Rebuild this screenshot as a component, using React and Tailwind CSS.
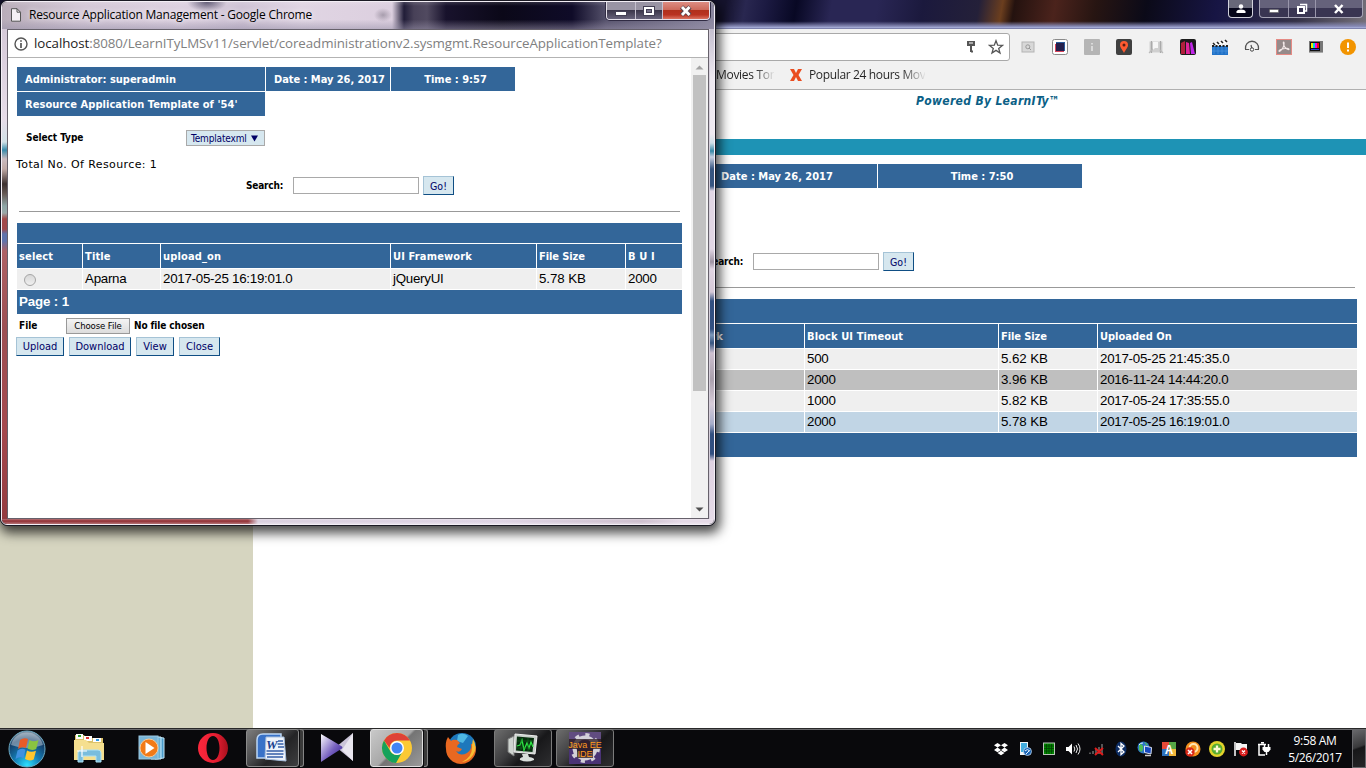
import React from "react";

const TAHOMA = "font-['DejaVu_Sans_Condensed','DejaVu_Sans',sans-serif]";
const SEGOE = "font-['Open_Sans','Noto_Sans',sans-serif]";
const ARIAL = "font-['Liberation_Sans',Arial,sans-serif]";

function Svg({ s = 16, w, h, children, className = "", box }) {
  const W = w || s;
  const H = h || s;
  return (
    <svg width={W} height={H} viewBox={box || `0 0 ${W} ${H}`} className={`shrink-0 ${className}`}>
      {children}
    </svg>
  );
}

/* ---------- shared page controls ---------- */

function Btn({ children, className = "" }) {
  return (
    <button
      className={`h-[19px] shrink-0 border border-t-[#a5c3d6] border-l-[#a5c3d6] border-r-[#0f4e84] border-b-[#0f4e84] bg-[#d6e7ef] text-center leading-[18px] whitespace-nowrap text-[#000066] ${TAHOMA} ${className}`}
    >
      {children}
    </button>
  );
}

function SearchRow({ className = "" }) {
  return (
    <div className={`flex h-[19px] items-center ${className}`}>
      <span className={`w-[47px] shrink-0 text-[10px] font-bold tracking-[-0.2px] text-black ${TAHOMA}`}>Search:</span>
      <div className="h-[17px] w-[126px] shrink-0 border border-[#a9a9a9] bg-white" />
      <Btn className="ml-1 w-[31px] text-[10.5px]">Go!</Btn>
    </div>
  );
}

/* ---------- toolbar extension icons ---------- */

function Extensions() {
  return (
    <div className="flex items-center gap-4">
      <Svg>
        <rect x="2" y="3" width="12" height="10" fill="#d8d8d8" stroke="#b4b4b4" />
        <circle cx="7.8" cy="7.8" r="2" fill="none" stroke="#999" />
        <path d="M9 9l2 2" stroke="#999" />
      </Svg>
      <Svg>
        <rect x="0.5" y="0.5" width="15" height="15" rx="2" fill="#fff" stroke="#8a8a8a" />
        <rect x="3" y="5" width="9" height="8" fill="#d9455c" />
        <rect x="4" y="3" width="9" height="9" fill="#2a5c9c" />
        <rect x="4" y="4" width="8" height="8" fill="#24204c" />
      </Svg>
      <Svg>
        <rect width="16" height="16" rx="1" fill="#b5b5b5" />
        <path d="M8 4v1.5M8 7v5" stroke="#eee" strokeWidth="1.3" />
      </Svg>
      <Svg>
        <rect width="16" height="16" rx="2" fill="#404040" />
        <path d="M8 14C6 10 4 8.500 4 6a4 4 0 0 1 8 0C12 8.500 10 10 8 14z" fill="#ff5a30" />
        <circle cx="8" cy="6" r="1.500" fill="#5a1d10" />
      </Svg>
      <Svg>
        <path d="M1.500 2.500h13v11h-13z" fill="#d0d0d0" />
        <path d="M3.500 2v12M12.500 2v12" stroke="#aaa" strokeWidth="1.200" />
        <path d="M1 14l5-5M15 14l-3-3" stroke="#bbb" strokeWidth="1.200" />
        <path d="M5 3h5v6H7l-2 2z" fill="#f6f6f6" />
      </Svg>
      <Svg>
        <rect width="16" height="16" rx="2" fill="#1b1b1b" />
        <path d="M1 4l4-2v13H1z" fill="#b0203c" />
        <path d="M6 3l3 1 1 11H6z" fill="#e0249a" />
        <path d="M10 4l2-1 3 12h-4z" fill="#c026e8" />
      </Svg>
      <Svg>
        <rect x="0" y="7" width="16" height="9" fill="#2273c8" />
        <path d="M0 5l15-4v3L1 7z" fill="#fff" />
        <path d="M1 4l2 2M5 3l2 2M9 2l2 2M13 1l2 2" stroke="#222" strokeWidth="1.600" />
        <path d="M0 7h16" stroke="#222" strokeWidth="1.800" strokeDasharray="2 1.500" />
        <path d="M2 8v7M6 8v7M10 8v7M14 8v7M0 12h16" stroke="#4a94dc" strokeWidth="0.700" />
      </Svg>
      <Svg>
        <path d="M1.500 10a6.600 6.600 0 1 1 13 0" fill="none" stroke="#555" strokeWidth="1.300" />
        <path d="M1 10.500h4M11 10.500h4M7 6l1 4" stroke="#555" strokeWidth="1.200" />
        <circle cx="8" cy="10.500" r="1.700" fill="#fff" stroke="#444" />
      </Svg>
      <Svg>
        <rect x="0.500" y="0.500" width="15" height="15" fill="#958a8a" stroke="#e58a84" />
        <path d="M7.500 3c1.200 0 .5 4-1 6.500S3 13 3 12s3-2 6-2.500 4 0 4 .8-2.500 0-4-2S7 3 7.500 3z" fill="none" stroke="#f3e8e8" strokeWidth="1.100" />
      </Svg>
      <Svg>
        <rect x="1" y="2" width="14" height="11" fill="#777" />
        <rect x="2" y="3" width="10" height="9" fill="#111" />
        <path d="M4 4v5" stroke="#ee0" strokeWidth="2" />
        <path d="M6 4v5" stroke="#0dd" strokeWidth="2" />
        <path d="M8 4v5" stroke="#e0e" strokeWidth="2" />
        <path d="M10 4v5" stroke="#e11" strokeWidth="2" />
        <path d="M3 10.500h8" stroke="#2a3fd0" />
        <path d="M1 13.500h14" stroke="#aaa" />
      </Svg>
      <Svg>
        <circle cx="8" cy="8" r="8" fill="#f29400" />
        <path d="M8 3.500v5.500M8 10.500v2" stroke="#fff" strokeWidth="2" />
      </Svg>
    </div>
  );
}

/* ---------- main browser ---------- */

const ROWS = [
  ["500", "5.62 KB", "2017-05-25 21:45:35.0", "bg-[#efefef]"],
  ["2000", "3.96 KB", "2016-11-24 14:44:20.0", "bg-[#bfbfbf]"],
  ["1000", "5.82 KB", "2017-05-24 17:35:55.0", "bg-[#efefef]"],
  ["2000", "5.78 KB", "2017-05-25 16:19:01.0", "bg-[#c1d5e5]"],
];

function MainTitleBar() {
  return (
    <div className="flex h-[29px] shrink-0 items-start justify-end border-b border-[#7e82ae] bg-[linear-gradient(180deg,transparent_76%,#8689b5_94%,#aeb6df_100%),linear-gradient(100deg,#15132d_0,#15132d_715px,#292750_735px,#1c1a42_755px,#080824_785px,#292654_820px,#292654_865px,#1b193d_910px,#242039_965px,#6b3e1e_988px,#24120f_1000px,#4b231c_1040px,#271512_1080px,#0b0a18_1130px,#171544_1200px,#343147_1280px,#75717a_1350px)]">
      <div className="mr-[6px] flex h-[18px] w-[25px] items-center justify-center rounded-b-[4px] border border-t-0 border-[#d2d2dc] bg-[linear-gradient(180deg,#686879_45%,#06061a_46%)]">
        <Svg w={12} h={12}>
          <circle cx="6" cy="3.500" r="2.200" fill="#fff" />
          <path d="M1.500 10V8.500Q2 6.500 6 6.500t4.500 2V10z" fill="#fff" />
        </Svg>
      </div>
      <div className="mr-[3px] flex h-[18px] w-[104px] rounded-b-[4px] border border-t-0 border-[#a4a2b4] bg-[linear-gradient(180deg,#65627b_45%,#393552_46%)]">
        <div className="flex w-[29px] items-center justify-center border-r border-[#9996ab]">
          <Svg w={12} h={12}><rect x="1.500" y="6.500" width="9" height="3" fill="#fff" stroke="#555" strokeWidth=".5" /></Svg>
        </div>
        <div className="flex w-[27px] items-center justify-center border-r border-[#9996ab]">
          <Svg w={12} h={12}>
            <path d="M4 1.500h6.500v6.500H9" fill="none" stroke="#fff" strokeWidth="1.500" />
            <rect x="2" y="4" width="6" height="6" fill="none" stroke="#fff" strokeWidth="2" />
          </Svg>
        </div>
        <div className="flex flex-1 items-center justify-center">
          <Svg w={12} h={12}><path d="M2 2l7.500 8M9.500 2L2 10" stroke="#fff" strokeWidth="2.500" /></Svg>
        </div>
      </div>
    </div>
  );
}

function MainToolbar() {
  return (
    <div className="flex h-[61px] shrink-0 flex-col border-b border-[#b0b0b0] bg-[#f1f1f1]">
      <div className="flex h-[36px] items-center pr-[10px]">
        <div className="flex h-[28px] w-[1010px] items-center justify-end gap-[9px] rounded-[3px] border border-[#a9a9a9] bg-white pr-[5px]">
          <Svg>
            <path d="M4 2h8v5H4z" fill="#555" />
            <path d="M6 4h4" stroke="#fff" />
            <path d="M8 6v7M8 12.500h2" stroke="#555" strokeWidth="2" />
          </Svg>
          <Svg>
            <path d="M8 1.700l1.700 4.500 4.700.2-3.700 3 1.300 4.600L8 11.400 4 14l1.300-4.600-3.700-3 4.700-.2z" fill="none" stroke="#555" strokeWidth="1.300" />
          </Svg>
        </div>
        <div className="ml-[10px]"><Extensions /></div>
      </div>
      <div className={`flex h-[20px] items-center pl-[716px] text-[12px] text-[#333] ${SEGOE}`}>
        <div className="w-[59px]">
          <span className="inline-block bg-[linear-gradient(90deg,#222_68%,#e4e4e4_100%)] bg-clip-text tracking-[-0.3px] whitespace-nowrap text-transparent">Movies Tor</span>
        </div>
        <Svg className="ml-[14px]" w={14} h={14}>
          <path d="M1 1h4l2 4 2-4h4L9.500 7l3.500 6H9L7 9l-2 4H1l3.500-6z" fill="#ea4d20" />
        </Svg>
        <div className="ml-[6px]">
          <span className="inline-block bg-[linear-gradient(90deg,#222_80%,#e4e4e4_100%)] bg-clip-text tracking-[-0.35px] whitespace-nowrap text-transparent">Popular 24 hours Mov</span>
        </div>
      </div>
    </div>
  );
}

function MainPage() {
  const grid = "grid grid-cols-[542px_193px_98px_259px] gap-x-px";
  return (
    <div className="flex flex-1 flex-col bg-white">
      <div className="h-[49px] shrink-0 pl-[916px]">
        <span className={`block pt-[2px] text-[12px] leading-[18px] font-bold tracking-[0.33px] whitespace-nowrap text-[#0b5f86] italic ${TAHOMA}`}>Powered By LearnITy™</span>
      </div>
      <div className="h-4 shrink-0 bg-[#1e93b5]" />
      <div className="flex flex-1">
        <div className="w-[253px] shrink-0 bg-[#d6d5c0]" />
        <div className="flex-1 pt-[9px] pl-[9px]">
          <div className={`grid h-6 grid-cols-[411px_203px_204px] gap-x-px text-center text-[11px] leading-[25px] font-bold text-white ${TAHOMA}`}>
            <div className="h-6 bg-[#336699]" />
            <div className="h-6 bg-[#336699] pl-[3px]">Date : May 26, 2017</div>
            <div className="h-6 bg-[#336699] pl-[4px]">Time : 7:50</div>
          </div>
          <SearchRow className="mt-[64px] ml-[444px]" />
          <div className="mt-4 ml-[2px] h-px w-[1091px] bg-[#999]" />
          <div className="mt-[11px] flex w-[1095px] flex-col gap-px">
            <div className="h-6 bg-[#336699]" />
            <div className={`${grid} h-6 text-[11px] leading-[26px] font-bold tracking-[0.1px] text-white ${TAHOMA}`}>
              <div className="h-6 bg-[#336699] pr-[81px] text-right">UI Framework</div>
              <div className="h-6 bg-[#336699] pl-[2px]">Block UI Timeout</div>
              <div className="h-6 bg-[#336699] pl-[2px] tracking-[-0.1px]">File Size</div>
              <div className="h-6 bg-[#336699] pl-[2px] tracking-[0px]">Uploaded On</div>
            </div>
            {ROWS.map((r, i) => (
              <div key={i} className={`${grid} h-5 text-[13.33px] leading-[19px] tracking-[-0.26px] text-black ${ARIAL}`}>
                <div className={`h-5 ${r[3]}`} />
                <div className={`h-5 pl-[2px] ${r[3]}`}>{r[0]}</div>
                <div className={`h-5 pl-[2px] tracking-[-0.1px] ${r[3]}`}>{r[1]}</div>
                <div className={`h-5 pl-[2px] ${r[3]}`}>{r[2]}</div>
              </div>
            ))}
            <div className="h-6 bg-[#336699]" />
          </div>
        </div>
      </div>
    </div>
  );
}

/* ---------- popup window ---------- */

function PopupTitle() {
  return (
    <div className="flex h-[27px] shrink-0 items-start bg-[radial-gradient(ellipse_20px_10px_at_205px_0,#45405ccc,transparent),radial-gradient(ellipse_9px_7px_at_381px_13px,#8d8494aa,transparent),linear-gradient(180deg,#ffffff22_0,transparent_15%,transparent_65%,#9992aa88_100%),linear-gradient(90deg,#b9adb9_0,#d4c8d7_80px,#ddd1e0_180px,#cfc3d5_240px,#e0d5e3_300px,#dccfdf_390px,#211d38_402px,#484158_412px,#514a60_425px,#18122c_444px,#0b0818_500px,#0f0b28_570px,#55516b_604px,#8d89a1_716px)]">
      <Svg w={12} h={14} className="mt-[6px] ml-[8px]">
        <path d="M1.500.7h5.500l3.500 3.500v9h-9z" fill="#f4f0f4" stroke="#555" />
        <path d="M7 .7v3.500h3.500" fill="none" stroke="#555" />
      </Svg>
      <div className={`ml-[7px] flex-1 pt-[4px] text-[12px] leading-[18px] tracking-[-0.2px] whitespace-nowrap text-black [text-shadow:0_0_6px_#fff] ${SEGOE}`}>Resource Application Management - Google Chrome</div>
      <div className="mr-[4px] flex h-[18px] w-[104px] overflow-hidden rounded-b-[4px] border border-t-0 border-[#e5e1ea] shadow-[0_0_0_1px_#302b43]">
        <div className="flex w-[29px] items-center justify-center border-r border-[#c5c0ce] bg-[linear-gradient(180deg,#9994a4_45%,#3a3549_48%,#67627a)]">
          <Svg w={14} h={12}><rect x="1.500" y="6.500" width="11" height="4" fill="#fff" stroke="#444055" /></Svg>
        </div>
        <div className="flex w-[27px] items-center justify-center border-r border-[#c5c0ce] bg-[linear-gradient(180deg,#9994a4_45%,#3a3549_48%,#67627a)]">
          <Svg w={14} h={12}>
            <rect x="1.500" y="1.500" width="11" height="9" fill="#fff" stroke="#444055" />
            <rect x="4.500" y="4.500" width="5" height="3" fill="#77728a" stroke="#444055" />
          </Svg>
        </div>
        <div className="flex flex-1 items-center justify-center bg-[linear-gradient(180deg,#dc8d83_0,#cd6a5c_45%,#b0301c_48%,#b93321_75%,#dc7361_100%)]">
          <Svg w={14} h={12}>
            <path d="M2.500 2l8.500 8M11 2l-8.500 8" stroke="#55434d" strokeWidth="4.500" />
            <path d="M3 2l7.500 8M10.500 2L3 10" stroke="#fff" strokeWidth="2.800" />
          </Svg>
        </div>
      </div>
    </div>
  );
}

function PopupPage() {
  const grid = "grid grid-cols-[65px_77px_229px_145px_88px_56px] gap-x-px";
  const cell = "h-6 bg-[#336699] pl-[2px]";
  const row = "h-5 bg-[#efefef] pl-[2px]";
  return (
    <div className="flex flex-1 flex-col bg-white pt-[9px] pl-[8px]">
      <div className={`ml-px grid shrink-0 grid-cols-[248px_124px_124px] gap-px text-[11px] leading-[25px] font-bold whitespace-nowrap text-white ${TAHOMA}`}>
        <div className="h-6 bg-[#336699] pl-[8px]">Administrator: superadmin</div>
        <div className="h-6 bg-[#336699] pl-[8px] tracking-[-0.05px]">Date : May 26, 2017</div>
        <div className="h-6 bg-[#336699] pl-[5px] text-center">Time : 9:57</div>
        <div className="h-6 bg-[#336699] pl-[8px] tracking-[0.06px]">Resource Application Template of '54'</div>
      </div>
      <div className={`mt-[14px] ml-[10px] flex h-4 shrink-0 items-center text-[10px] font-bold text-black ${TAHOMA}`}>
        <span className="-mt-px w-[160px] tracking-[-0.05px]">Select Type</span>
        <div className="flex h-4 w-[79px] items-center justify-between border border-[#a9a9a9] bg-[#d6e7ef] pr-[6px] pl-[4px] text-[10px] font-normal tracking-[-0.15px] whitespace-nowrap text-[#000066]">
          <span>Templatexml</span>
          <Svg w={7} h={7}><path d="M0 0.500h7L3.500 6.500z" fill="#000066" /></Svg>
        </div>
      </div>
      <div className="mt-[10px] h-4 shrink-0 font-['DejaVu_Sans',sans-serif] text-[11px] leading-[17px] tracking-[0.4px] text-black">Total No. Of Resource: 1</div>
      <SearchRow className="mt-[4px] ml-[230px] shrink-0" />
      <div className="mt-4 ml-[3px] h-px w-[661px] shrink-0 bg-[#999]" />
      <div className="mt-[11px] ml-px flex w-[665px] shrink-0 flex-col gap-px">
        <div className="h-5 bg-[#336699]" />
        <div className={`${grid} h-6 text-[11px] leading-[26px] font-bold tracking-[0.15px] text-white ${TAHOMA}`}>
          <div className={cell}>select</div>
          <div className={cell}>Title</div>
          <div className={cell}>upload_on</div>
          <div className={cell}>UI Framework</div>
          <div className={`tracking-[-0.1px] ${cell}`}>File Size</div>
          <div className={cell}>B U I</div>
        </div>
        <div className={`${grid} h-5 text-[13.33px] leading-[19px] tracking-[-0.26px] text-black ${ARIAL}`}>
          <div className={`flex items-center ${row}`}>
            <span className="mt-px ml-[5px] block size-[12px] rounded-full border border-[#a5a5a5] bg-[linear-gradient(180deg,#d8d8d8,#efefef)]" />
          </div>
          <div className={row}>Aparna</div>
          <div className={row}>2017-05-25 16:19:01.0</div>
          <div className={row}>jQueryUI</div>
          <div className={`tracking-[-0.1px] ${row}`}>5.78 KB</div>
          <div className={row}>2000</div>
        </div>
        <div className={`h-6 bg-[#336699] pl-[2px] text-[13.33px] leading-[23px] font-bold tracking-[-0.15px] text-white ${ARIAL}`}>Page : 1</div>
      </div>
      <div className={`mt-[4px] ml-[3px] flex h-4 shrink-0 items-center text-[10px] font-bold text-black ${TAHOMA}`}>
        <span className="-mt-px w-[47px]">File</span>
        <button className="h-4 w-[64px] border border-[#999] bg-[linear-gradient(180deg,#f4f4f4,#dcdcdc)] text-[9.5px] leading-[14px] font-normal tracking-[-0.1px] whitespace-nowrap">Choose File</button>
        <span className="-mt-px ml-1 tracking-[-0.1px]">No file chosen</span>
      </div>
      <div className="mt-[3px] flex gap-[5px] text-[11px]">
        <Btn className="w-[48px]">Upload</Btn>
        <Btn className="w-[62px]">Download</Btn>
        <Btn className="w-[38px]">View</Btn>
        <Btn className="w-[41px]">Close</Btn>
      </div>
    </div>
  );
}

function Popup() {
  return (
    <div className="absolute top-0 left-0 flex h-[526px] w-[716px] flex-col rounded-[7px] border border-[#1b1a24] bg-[#1b1a24] shadow-[2px_5px_12px_2px_rgba(0,0,0,0.72)]">
      <div className="flex min-h-0 flex-1 flex-col overflow-hidden rounded-[6px] border border-[#f3eef5]">
        <PopupTitle />
        <div className="flex min-h-0 flex-1">
          <div className="w-[5px] shrink-0 bg-[linear-gradient(180deg,#d5c9d8_0,#e7dce8_90px,#d0e0e6_113px,#3a8cab_121px,#cbbcc0_130px,#c0aaa6_140px,#3c302f_155px,#675a56_165px,#8ea5a6_177px,#9aa9a8_184px,#a34a4a_190px,#a24a4c_200px,#6073ab_205px,#6073ab_212px,#ae6164_222px,#9d5054_300px,#a5494e_400px,#943b40_100%)]" />
          <div className="flex min-h-0 flex-1 flex-col border border-[#66616b]">
            <div className={`flex h-7 shrink-0 items-center border-b border-[#b3b3b3] bg-white pl-[6px] text-[13.33px] tracking-[-0.07px] whitespace-nowrap text-[#808080] ${SEGOE}`}>
              <Svg s={14}>
                <circle cx="7" cy="7" r="6" fill="none" stroke="#555" strokeWidth="1.400" />
                <path d="M7 3.200v1.600M7 6v5" stroke="#555" strokeWidth="1.700" />
              </Svg>
              <span className="ml-[6px]"><span className="text-[#222]">localhost</span>:8080/LearnITyLMSv11/servlet/coreadministrationv2.sysmgmt.ResourceApplicationTemplate?</span>
            </div>
            <div className="flex min-h-0 flex-1">
              <PopupPage />
              <div className="flex w-[17px] shrink-0 flex-col items-center bg-[#f1f1f1]">
                <Svg w={9} h={17}><path d="M.5 11.500h8l-4-4z" fill="#a3a3a3" /></Svg>
                <div className="h-[316px] w-[13px] shrink-0 bg-[#c1c1c1]" />
                <div className="flex-1" />
                <Svg w={9} h={17}><path d="M.5 6.500h8l-4 4z" fill="#505050" /></Svg>
              </div>
            </div>
          </div>
          <div className="w-[5px] shrink-0 border-l border-[#d7d0dc] bg-[linear-gradient(180deg,#c4bfcf_0,#eee9f1_50px,#efe9f1_105px,#cfe0e7_114px,#3789a7_122px,#c9d1e2_128px,#365581_140px,#365581_157px,#e2d7e5_162px,#e2d7e5_220px,#9e93a2_233px,#e1d5e3_240px,#d6c9d8_263px,#314f80_272px,#314f80_300px,#7d98ba_306px,#365581_314px,#cdc0d0_324px,#aaa0ad_350px,#d7cbd9_375px,#a7adca_395px,#314f80_405px,#314f80_425px,#dfd1e1_432px,#e6dbe8_100%)]" />
        </div>
        <div className="h-[5px] shrink-0 bg-[linear-gradient(180deg,#fff5_0,#fff0_40%,#fff5_100%),linear-gradient(90deg,#912f34_0,#912f34_246px,#d8cddd_256px,#ddd2e3_500px,#cbbccb_640px,#e3d7e5_680px)]" />
      </div>
    </div>
  );
}

/* ---------- taskbar ---------- */

function Slot({ children, kind }) {
  const frame = {
    plain: "",
    open: "w-[58px] rounded-[3px] border border-[#7b7b7b] bg-[linear-gradient(135deg,#6d6d6d_0,#3c3c3e_40%,#18181a_60%,#2e2e30_100%)]",
    stack: "w-[53px] rounded-[3px] border border-[#8a8a8a] bg-[linear-gradient(135deg,#7d7d7d_0,#48484a_40%,#242426_60%,#3e3e40_100%)]",
    active: "w-[53px] rounded-[3px] border border-[#e0e0e0] bg-[linear-gradient(135deg,#c9c9c9_0,#a8a8a8_48%,#747474_52%,#9a9a9a_100%)]",
  }[kind];
  const stacked = kind === "stack" || kind === "active";
  return (
    <div className="flex h-[38px] w-[62px] shrink-0 items-center justify-center">
      <div className={`flex h-[38px] items-center justify-center ${frame}`}>{children}</div>
      {stacked && <div className="ml-px h-[38px] w-[4px] rounded-r-[3px] border border-l-0 border-[#858585] bg-[#3a3a3a]" />}
    </div>
  );
}

function Tray() {
  return (
    <div className="flex items-center gap-2">
      <Svg>
        <path d="M4.500 2L8 4.300 4.500 6.600 1 4.300zM11.500 2L15 4.300l-3.500 2.300L8 4.300zM4.500 6.600L8 8.900l-3.500 2.300L1 8.900zM11.500 6.600L15 8.900l-3.500 2.300L8 8.900zM4.500 12L8 9.800l3.500 2.200L8 14.300z" fill="#fff" />
      </Svg>
      <Svg>
        <rect x="3" y="1" width="8" height="13" fill="#f0f5f8" />
        <rect x="4" y="2" width="6" height="9" fill="#42aee0" />
        <circle cx="10.500" cy="10.500" r="4" fill="#1963b5" stroke="#d5e8f8" strokeWidth=".7" />
        <path d="M8 10q2-3 5 0M9 13l3-3" stroke="#e6f5ff" fill="none" />
      </Svg>
      <Svg>
        <rect x="2.500" y="2" width="11" height="11.500" fill="#008500" stroke="#b8c5b8" />
        <path d="M5.500 3v10M8 3v10M10.500 3v10M3 5h10M3 7.500h10M3 10h10" stroke="#004200" strokeWidth=".8" />
      </Svg>
      <Svg>
        <path d="M1 6h2.500L7 2.500v11L3.500 10H1z" fill="#fff" />
        <path d="M9 5.500q1.700 2.500 0 5M11 4q3 4 0 8M13 2.500q4 5.500 0 11" fill="none" stroke="#eee" />
      </Svg>
      <Svg>
        <path d="M1 13v-1.500M4 13v-3M7 13V8M10 13V6M13 13V3" stroke="#555" strokeWidth="2" />
        <path d="M6 7l8 7M14 7l-8 7" stroke="#df1b1b" strokeWidth="2" />
      </Svg>
      <Svg>
        <ellipse cx="8" cy="8" rx="5.500" ry="7.500" fill="#0d2d64" />
        <path d="M5 5l6 6-3 2.500v-11L11 5l-6 6" fill="none" stroke="#fff" strokeWidth="1.300" />
      </Svg>
      <Svg>
        <circle cx="6.500" cy="6.500" r="6" fill="#2b74c8" />
        <path d="M2 3q5 0 4 5t-4 1zM7 1q5 2 3 4z" fill="#4fbd54" />
        <path d="M2 4q1-2 4-2" stroke="#d8ecff" fill="none" />
        <path d="M7.500 5l7 1.500-.5 6.500-6.500-1.500z" fill="#1748bf" stroke="#dae2ef" />
        <path d="M8 14.500h6" stroke="#ccc" strokeWidth="1.500" />
      </Svg>
      <Svg>
        <path d="M1 1h7v7H1z" fill="#e64a37" /><path d="M8 1h7v7H8z" fill="#55a646" />
        <path d="M1 8h7v7H1z" fill="#2d72bd" /><path d="M8 8h7v7H8z" fill="#f2b73b" />
        <text x="8" y="12.500" textAnchor="middle" fill="#fff" fontFamily="Liberation Sans" fontSize="12" fontWeight="700">A</text>
      </Svg>
      <Svg>
        <circle cx="8" cy="8" r="7.500" fill="#f3901d" />
        <circle cx="8.500" cy="7" r="4" fill="none" stroke="#ffe6b2" strokeWidth="2" />
        <circle cx="5" cy="11" r="4.700" fill="#d92917" />
        <path d="M3 9l4 4M7 9l-4 4" stroke="#fff" strokeWidth="1.600" />
      </Svg>
      <Svg>
        <circle cx="8" cy="8" r="8" fill="#e3d32b" />
        <circle cx="8" cy="8" r="5.500" fill="#58ac30" />
        <path d="M8 4.500v7M4.500 8h7" stroke="#fffbd2" strokeWidth="2.300" />
      </Svg>
      <Svg>
        <path d="M2 1v14" stroke="#fff" strokeWidth="1.500" />
        <path d="M3 2h5l1 1h5v7H8L7 9H3z" fill="#f4f4f4" />
        <circle cx="10.500" cy="11" r="4.400" fill="#d81d1d" />
        <path d="M9 9.500l3 3M12 9.500l-3 3" stroke="#fff" strokeWidth="1.400" />
      </Svg>
      <Svg>
        <path d="M1 3.500h8M2 3v11h6M4 1.800h3" fill="none" stroke="#fff" strokeWidth="1.500" />
        <path d="M5.500 6h8v2.500l-2 2.500h-4l-2-2.500z" fill="#fff" />
        <path d="M7.500 3v3M11.500 3v3M9.500 11v3" stroke="#fff" strokeWidth="1.500" />
      </Svg>
    </div>
  );
}

function Taskbar() {
  return (
    <div className="relative flex h-10 shrink-0 border-t border-[#292929] bg-[#09090c] shadow-[inset_0_1px_0_#6b6b6e]">
      <div className="flex w-[58px] items-center pl-[8px]">
        <Svg s={38}>
          <defs>
            <radialGradient id="orb" cx=".5" cy=".95" r=".9">
              <stop offset="0" stopColor="#2de1ff" /><stop offset=".4" stopColor="#147db5" /><stop offset=".8" stopColor="#143c66" /><stop offset="1" stopColor="#798da0" />
            </radialGradient>
          </defs>
          <circle cx="19" cy="19" r="18" fill="url(#orb)" stroke="#6caac3" />
          <path d="M3 15a16.500 16.500 0 0 1 32 0q-16 6-32 0z" fill="#c5d3dd" opacity=".5" />
          <path d="M12 10q4-3 8-1l-2 9q-4-2-8 1z" fill="#e75b28" />
          <path d="M21.500 10q4 2.500 9 0l-2.300 9q-4.500 2-8.700-.5z" fill="#8ac43f" />
          <path d="M9.500 20.500q4-2.800 8-.8l-2 8.500q-4-2-8 .8z" fill="#3f91e0" />
          <path d="M19 20.500q4 2.500 9 .3l-2.300 8.700q-4.500 2-8.700-.5z" fill="#ffc62d" />
        </Svg>
      </div>
      <Slot kind="plain">
        <Svg s={32}>
          <path d="M2 3h9l2 3h17v21H2z" fill="#dcc36b" />
          <path d="M3 2h7v5H3zM11 4h8v5h-8zM20 6h8v4h-8z" fill="#fff" />
          <path d="M5 3h3v2H5z" fill="#31a331" /><path d="M13 5h3v2h-3z" fill="#d33" /><path d="M23 7h3v2h-3z" fill="#369be0" />
          <path d="M1 8h12l3 3h15v17H1z" fill="#f5df8f" />
          <path d="M5 30V21q0-3 3-3h17q3 0 3 3v9h-5v-6H10v6z" fill="#79bddd" stroke="#aee1f4" />
          <path d="M9 14v11M4 19h10" stroke="#fff" strokeWidth="1.200" />
        </Svg>
      </Slot>
      <Slot kind="plain">
        <Svg s={28}>
          <path d="M18 3l9 1v20l-9 1z" fill="#4b9bc9" stroke="#c5e7f8" />
          <path d="M14 3h10v22H14z" fill="#69b0d5" stroke="#cdeefd" />
          <rect x="2" y="2" width="19" height="23" fill="#78b5d8" stroke="#9dcae2" />
          <circle cx="12" cy="14" r="9" fill="#f27a17" stroke="#f6c997" />
          <path d="M8.500 8l9 6-9 6z" fill="#fff" />
        </Svg>
      </Slot>
      <Slot kind="plain">
        <Svg s={32}>
          <defs><linearGradient id="op" x1="0" x2="1"><stop stopColor="#fc273c" /><stop offset=".6" stopColor="#e61e32" /><stop offset="1" stopColor="#a6101d" /></linearGradient></defs>
          <path fillRule="evenodd" d="M16 1a15 15 0 1 0 0 30 15 15 0 0 0 0-30zM16 4c4 0 6.500 5.500 6.500 12S20 28 16 28 9.500 22.500 9.500 16 12 4 16 4z" fill="url(#op)" />
        </Svg>
      </Slot>
      <Slot kind="stack">
        <Svg s={32} className="-ml-[4px]">
          <path d="M2 26V8q0-6 6-6h18v7H12v17z" fill="#3972c8" stroke="#bdd7f5" strokeWidth="1.500" />
          <path d="M11 5h18l2 24-21-2z" fill="#eef3fb" stroke="#a7bfdd" />
          <text x="11" y="17" fontFamily="Liberation Serif" fontWeight="700" fontStyle="italic" fontSize="13" fill="#1c408e">W</text>
          <path d="M23 9h5M22.500 12h6M23 15h6M11.500 19h17M11.500 22h17M12 25h16" stroke="#345fa8" strokeWidth="1.500" />
        </Svg>
      </Slot>
      <Slot kind="plain">
        <Svg s={34}>
          <defs>
            <linearGradient id="km" x1="0" y1="0" x2="1" y2="1"><stop stopColor="#fff" /><stop offset=".55" stopColor="#7761c0" /><stop offset="1" stopColor="#29178a" /></linearGradient>
          </defs>
          <path d="M33 2v28L16 16z" fill="#cbc5d9" /><path d="M33 2v28L22 19z" fill="#e9e6ef" />
          <path d="M1 3q12 7 21 12.500 1 1 0 2Q13 23 1 31z" fill="url(#km)" />
        </Svg>
      </Slot>
      <Slot kind="active">
        <Svg s={32}>
          <circle cx="16" cy="16" r="15" fill="#fbc934" />
          <path d="M3 8.500A15 15 0 0 1 29 8.500H16a7.500 7.500 0 0 0-7.500 7.500z" fill="#df4237" />
          <path d="M3 8.500A15 15 0 0 0 15 31l6.500-11.500a7 7 0 0 1-12 0z" fill="#16a25b" />
          <circle cx="16" cy="16" r="7" fill="#fff" /><circle cx="16" cy="16" r="5.500" fill="#4285f4" />
        </Svg>
      </Slot>
      <Slot kind="plain">
        <Svg s={32}>
          <circle cx="17" cy="15" r="14" fill="#1d78bc" />
          <path d="M13 3q5-3 10 1l-5 7-6-2z" fill="#4eb8e3" />
          <path d="M3 5l3 4q2-2 6-1l3 3q-3 2-3 4l5 2q-2 4-6 2 4 6 11 2 5-3 4-9 5 0 5 5A15 15 0 0 1 1 17Q0 10 3 5z" fill="#e86821" />
          <path d="M28 7q5 9 0 16-4 6-11 7 11-5 10-17z" fill="#f9bd32" />
        </Svg>
      </Slot>
      <Slot kind="open">
        <Svg s={32}>
          <path d="M1 7l6-3v20l-6-4z" fill="#cfd4d0" stroke="#777" />
          <path d="M8 2l22 2-2 18-21-2z" fill="#c8cfca" stroke="#eee" />
          <path d="M10 4.500l17 1.500-1.500 14L9 18.500z" fill="#062c0d" />
          <path d="M10 14l3-1 2-5 2 10 3-7 2 5 2-6 2 5" fill="none" stroke="#2de844" strokeWidth="1.300" />
          <path d="M10 9h16M10 16h15M14 6v12M21 6v13" stroke="#176b24" strokeWidth=".6" />
          <path d="M15 22h6l1 3q6 1 5 3-7 3-14 0-1-2 3-3z" fill="#d9dedb" />
        </Svg>
      </Slot>
      <Slot kind="open">
        <Svg w={36} h={32} box="-2 0 36 32">
          <rect width="32" height="32" fill="#4a3375" /><rect width="32" height="14" fill="#614c80" />
          <circle cx="16" cy="16" r="10.500" fill="none" stroke="#d3d0d8" strokeWidth="4" />
          <circle cx="16" cy="16" r="13" fill="none" stroke="#d3d0d8" strokeWidth="4" strokeDasharray="4 6.200" />
          <circle cx="16" cy="16" r="8" fill="#453766" />
          <path d="M0 7h32v10H24v9H8v-9H0z" fill="#2a1a1c" opacity=".75" />
          <g fontFamily="Liberation Sans" fontSize="9" fill="#ff9a1f" textAnchor="middle">
            <text x="16" y="15.500">Java EE</text><text x="16" y="24.500">IDE</text>
          </g>
        </Svg>
      </Slot>
      <div className="flex-1" />
      <Tray />
      <div className={`ml-[14px] flex w-[56px] flex-col items-center pt-[3px] text-[12px] leading-[17px] tracking-[-0.35px] whitespace-nowrap text-white ${SEGOE}`}>
        <span>9:58 AM</span>
        <span>5/26/2017</span>
      </div>
      <div className="ml-[9px] h-[39px] w-[14px] border border-[#67676b] bg-[linear-gradient(160deg,#68686b_0,#39393b_45%,#171719_50%,#252527_100%)]" />
    </div>
  );
}

export default function App() {
  return (
    <div className="relative flex h-[768px] w-[1366px] flex-col overflow-hidden bg-white">
      <MainTitleBar />
      <MainToolbar />
      <MainPage />
      <Taskbar />
      <Popup />
    </div>
  );
}
